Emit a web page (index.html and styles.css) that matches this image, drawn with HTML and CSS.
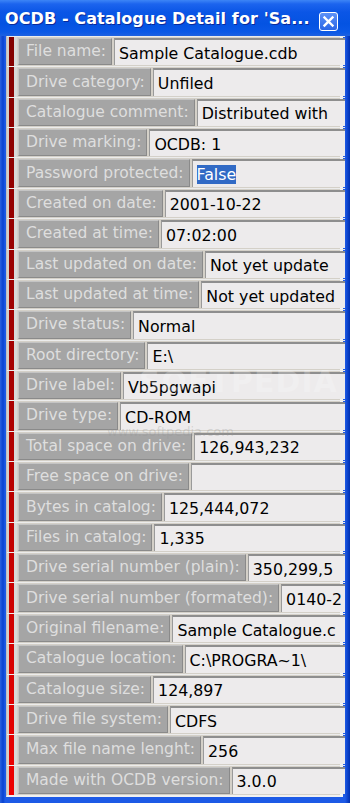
FILE: index.html
```html
<!DOCTYPE html>
<html>
<head>
    <meta charset="utf-8" />
    <title>OCDB - Catalogue Detail</title>
    <link rel="stylesheet" href="styles.css">
</head>
<body>
    <section id="window">
        <header id="titlebar">
            <span class="title">OCDB - Catalogue Detail for 'Sa...</span>
            <span class="closebtn">
                <svg width="13" height="13" viewBox="0 0 13 13"><path d="M2.5 2.5 L10.5 10.5 M10.5 2.5 L2.5 10.5" stroke="#fff" stroke-width="2.4" stroke-linecap="square"/></svg>
            </span>
        </header>
        <section id="client">
            <div class="row"><span class="mark"></span><span class="label">File name:</span><span class="value">Sample Catalogue.cdb</span></div>
            <div class="row"><span class="mark"></span><span class="label">Drive category:</span><span class="value">Unfiled</span></div>
            <div class="row"><span class="mark"></span><span class="label">Catalogue comment:</span><span class="value">Distributed with</span></div>
            <div class="row"><span class="mark"></span><span class="label">Drive marking:</span><span class="value">OCDB: 1</span></div>
            <div class="row"><span class="mark"></span><span class="label">Password protected:</span><span class="value"><span class="sel">False</span></span></div>
            <div class="row"><span class="mark"></span><span class="label">Created on date:</span><span class="value">2001-10-22</span></div>
            <div class="row"><span class="mark"></span><span class="label">Created at time:</span><span class="value">07:02:00</span></div>
            <div class="row"><span class="mark"></span><span class="label">Last updated on date:</span><span class="value">Not yet update</span></div>
            <div class="row"><span class="mark"></span><span class="label">Last updated at time:</span><span class="value">Not yet updated</span></div>
            <div class="row"><span class="mark"></span><span class="label">Drive status:</span><span class="value">Normal</span></div>
            <div class="row"><span class="mark"></span><span class="label">Root directory:</span><span class="value">E:\</span></div>
            <div class="row"><span class="mark"></span><span class="label">Drive label:</span><span class="value">Vb5pgwapi</span></div>
            <div class="row"><span class="mark"></span><span class="label">Drive type:</span><span class="value">CD-ROM</span></div>
            <div class="row"><span class="mark"></span><span class="label">Total space on drive:</span><span class="value">126,943,232</span></div>
            <div class="row"><span class="mark"></span><span class="label">Free space on drive:</span><span class="value"></span></div>
            <div class="row"><span class="mark"></span><span class="label">Bytes in catalog:</span><span class="value">125,444,072</span></div>
            <div class="row"><span class="mark"></span><span class="label">Files in catalog:</span><span class="value">1,335</span></div>
            <div class="row"><span class="mark"></span><span class="label">Drive serial number (plain):</span><span class="value">350,299,5</span></div>
            <div class="row"><span class="mark"></span><span class="label">Drive serial number (formated):</span><span class="value">0140-2</span></div>
            <div class="row"><span class="mark"></span><span class="label">Original filename:</span><span class="value">Sample Catalogue.c</span></div>
            <div class="row"><span class="mark"></span><span class="label">Catalogue location:</span><span class="value">C:\PROGRA~1\</span></div>
            <div class="row"><span class="mark"></span><span class="label">Catalogue size:</span><span class="value">124,897</span></div>
            <div class="row"><span class="mark"></span><span class="label">Drive file system:</span><span class="value">CDFS</span></div>
            <div class="row"><span class="mark"></span><span class="label">Max file name lenght:</span><span class="value">256</span></div>
            <div class="row"><span class="mark"></span><span class="label">Made with OCDB version:</span><span class="value">3.0.0</span></div>
            <div class="watermark">SOFTPEDIA</div>
            <div class="watermark-url">www.softpedia.com</div>
        </section>
    </section>
</body>
</html>
```

FILE: styles.css
```css
*{
    padding:0;
    margin:0;
    box-sizing:border-box;
}
body{
    width:350px;
    height:803px;
    overflow:hidden;
    background:#0a4fdc;
}
#window{
    width:350px;
    height:803px;
    display:flex;
    flex-direction:column;
    background:linear-gradient(90deg,#2a62e0 0,#0842d0 3px,#1d5ae6 5px,#1d5ae6 345px,#0a3fc6 348px,#0030b0 350px);
}
#titlebar{
    height:36px;
    flex-shrink:0;
    display:flex;
    align-items:center;
    padding:6px 0 0 5px;
    background:linear-gradient(#3d85f6 0,#1c64ee 4px,#0b56e6 12px,#0453e2 24px,#0a58e6 32px,#1e61e0 36px);
}
.title{
    flex-grow:1;
    margin-bottom:5px;
    color:#fff;
    font-family:"DejaVu Sans",sans-serif;
    font-weight:bold;
    font-size:16px;
    letter-spacing:0.1px;
    text-shadow:1px 1px 0 #0a2a9a;
    white-space:nowrap;
}
.closebtn{
    width:19px;
    height:19px;
    margin-right:12px;
    border:1px solid #fff;
    border-radius:3px;
    background:linear-gradient(#5d92f8,#2b66e6);
    display:flex;
    justify-content:center;
    align-items:center;
    flex-shrink:0;
}
#client{
    position:relative;
    flex-grow:1;
    margin:0 7px 6px 6px;
    background:#d4d0c8;
    border-left:1px solid #c0c0c0;
    border-right:3px solid #f4f4f4;
    border-bottom:2px solid #f0f0f0;
    display:grid;
    grid-template-rows:repeat(25,1fr);
}
.row{
    display:flex;
    min-height:0;
    border-top:1px solid #ececec;
    padding:1px 0 1px 2px;
}
.mark{
    margin:-1px 0 -1px 0;
    background:linear-gradient(#7e0000 0,#aa0000 400px,#f00000 803px);
    background-attachment:fixed;
    border-right:3px solid #d8d8d8;
    width:8px;
    flex-shrink:0;
}
.label{
    display:flex;
    align-items:center;
    padding:0 5px 1px 7px;
    margin-left:1px;
    background:#a5a5a5;
    color:#dedede;
    border:1px solid;
    border-color:#c4c4c4 #8a8a8a #8a8a8a #c4c4c4;
    font-family:"DejaVu Sans",sans-serif;
    font-size:15.5px;
    white-space:nowrap;
}
.value{
    flex-grow:1;
    min-width:0;
    display:flex;
    align-items:center;
    overflow:hidden;
    margin-left:2px;
    padding:1px 3px 0 4px;
    background:#edebec;
    border-top:2px solid #8e8e8e;
    border-left:1px solid #9a9a9a;
    color:#000;
    font-family:"DejaVu Sans",sans-serif;
    font-size:15.8px;
    white-space:nowrap;
}
.sel{
    background:#316ac5;
    color:#fff;
}
.watermark,
.watermark-url{
    position:absolute;
    color:rgba(255,255,255,0.22);
    font-family:"DejaVu Sans",sans-serif;
    pointer-events:none;
    white-space:nowrap;
}
.watermark{
    left:132px;
    top:328px;
    font-weight:bold;
    font-size:30px;
    letter-spacing:1px;
}
.watermark-url{
    left:100px;
    top:388px;
    font-size:13px;
    color:rgba(150,150,150,0.3);
}
```
